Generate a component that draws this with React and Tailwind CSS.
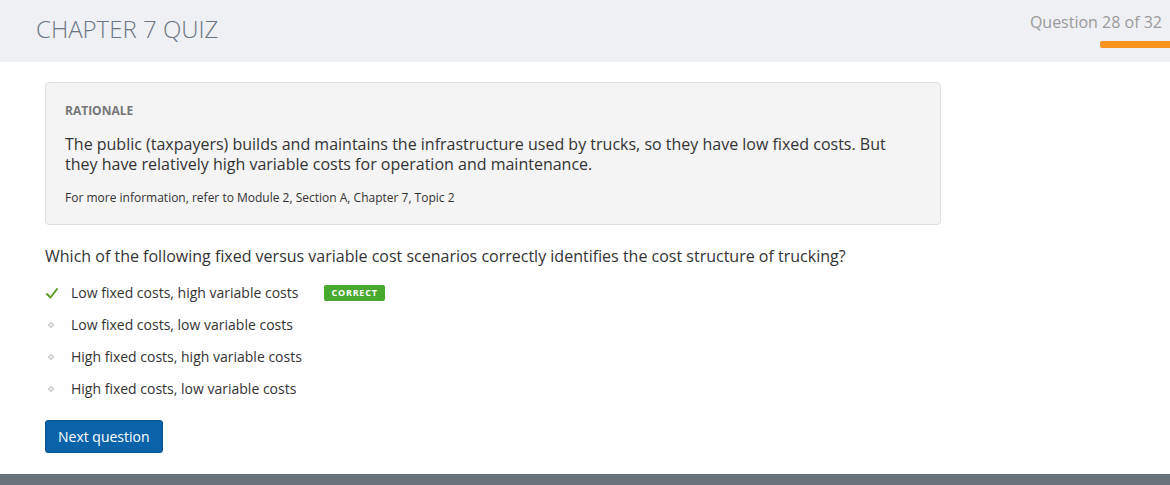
import React from "react";

const font = { fontFamily: '"Open Sans", "Noto Sans", sans-serif' };

function Dot() {
  return (
    <svg width="8" height="8" viewBox="0 0 8 8" className="block">
      <path d="M4 0.5 L7.5 4 L4 7.5 L0.5 4 Z" fill="#cfcfcf" />
      <path d="M4 2.5 L5.5 4 L4 5.5 L2.5 4 Z" fill="#f2f2f2" />
    </svg>
  );
}

function Check() {
  return (
    <svg width="12" height="11" viewBox="0 0 12 11" className="block">
      <path d="M1 6 L4.5 9.5 L11 1" fill="none" stroke="#5a9a2a" strokeWidth="2" strokeLinecap="round" strokeLinejoin="round" />
    </svg>
  );
}

const options = [
  { text: "Low fixed costs, high variable costs", correct: true },
  { text: "Low fixed costs, low variable costs" },
  { text: "High fixed costs, high variable costs" },
  { text: "High fixed costs, low variable costs" },
];

export default function App() {
  return (
    <div className="w-[1170px] h-[485px] flex flex-col bg-white overflow-hidden" style={font}>
      <header className="h-[62px] bg-[#eff0f4] flex justify-between shrink-0">
        <h1 className="pl-[36px] pt-[12px] text-[24px] font-light text-[#6b7583] leading-[34px]">
          CHAPTER 7 QUIZ
        </h1>
        <div className="flex flex-col items-end pt-[11px] pr-[8px]">
          <div className="text-[16px] text-[#9a9a9a] leading-[22px]">Question 28 of 32</div>
          <div className="mt-[8px] mr-[-8px] w-[70px] h-[7px] bg-[#f7931e] rounded-l-[2px]" />
        </div>
      </header>

      <main className="flex-1 pl-[45px] pt-[20px]">
        <div className="w-[896px] bg-[#f4f4f4] border border-[#e0e0e0] rounded-[4px] px-[19px] pt-[20px] pb-[18px]">
          <div className="text-[12px] font-bold text-[#777777] leading-[16px]">RATIONALE</div>
          <p className="mt-[15px] text-[16px] text-[#333333] leading-[20px]">
            The public (taxpayers) builds and maintains the infrastructure used by trucks, so they have low fixed costs. But
            they have relatively high variable costs for operation and maintenance.
          </p>
          <p className="mt-[16px] text-[12px] text-[#333333] leading-[16px]">
            For more information, refer to Module 2, Section A, Chapter 7, Topic 2
          </p>
        </div>

        <p className="mt-[20px] text-[16px] text-[#333333] leading-[22px]">
          Which of the following fixed versus variable cost scenarios correctly identifies the cost structure of trucking?
        </p>

        <ul className="mt-[16px] flex flex-col gap-[12px]">
          {options.map((o) => (
            <li key={o.text} className="flex items-center h-[20px]">
              <span className="w-[26px] flex items-center pl-[1px]">
                {o.correct ? <Check /> : <span className="pl-[1px]"><Dot /></span>}
              </span>
              <span className="text-[14px] text-[#333333] leading-[20px]">{o.text}</span>
              {o.correct && (
                <span className="ml-[26px] h-[16px] px-[7px] bg-[#47a92e] rounded-[2px] text-white text-[9px] font-bold tracking-[0.8px] leading-[16px]">
                  CORRECT
                </span>
              )}
            </li>
          ))}
        </ul>

        <button className="mt-[21px] h-[33px] px-[12px] bg-[#0a63a9] border border-[#08518c] rounded-[3px] text-white text-[14px] leading-[20px]">
          Next question
        </button>
      </main>

      <footer className="h-[11px] bg-[#69737c] shrink-0" />
    </div>
  );
}
